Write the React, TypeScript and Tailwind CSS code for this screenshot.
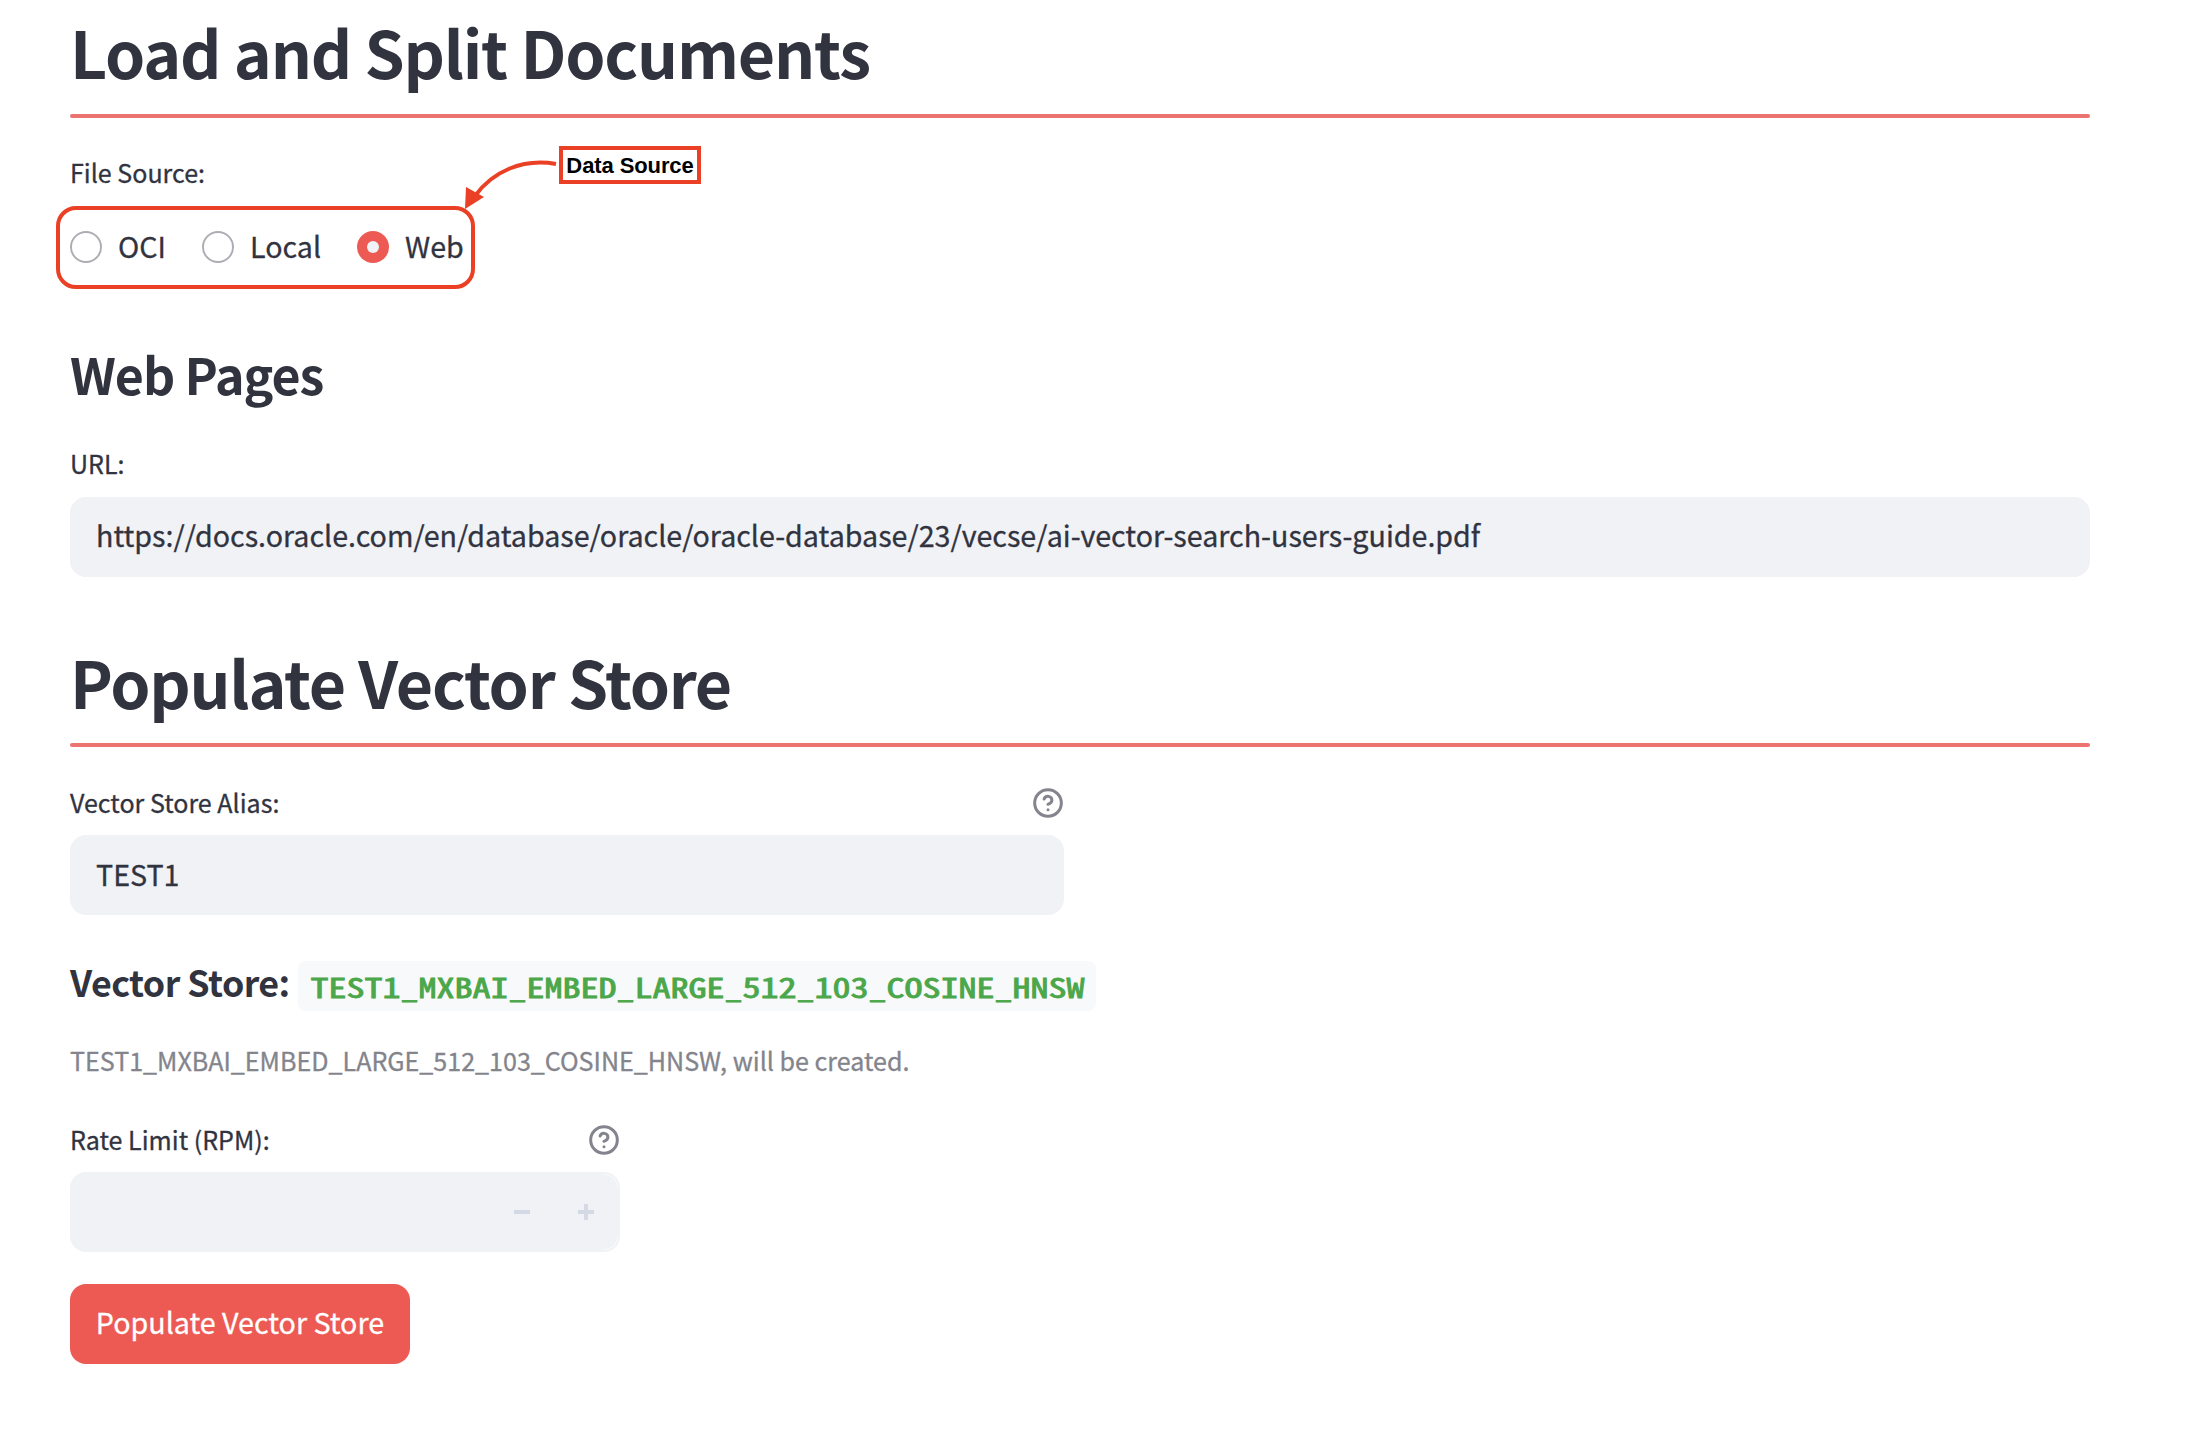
import React from "react";

const SANS = "font-['Noto_Sans_CJK_SC','Noto_Sans',sans-serif]";
const MONO = "font-['Noto_Sans_Mono_CJK_SC','Liberation_Mono',monospace]";
const BODY = "[-webkit-text-stroke:0.3px_currentColor]";

function Help() {
  return (
    <svg width="32" height="32" viewBox="0 0 24 24" fill="none" stroke="#83848d" strokeWidth="2.25" strokeLinecap="round" strokeLinejoin="round">
      <circle cx="12" cy="12" r="10" />
      <path d="M9.09 9a3 3 0 0 1 5.83 1c0 2-3 3-3 3" />
      <path d="M12 17h.01" />
    </svg>
  );
}

function Title({ children }: { children: React.ReactNode }) {
  return <h1 className="h-[72px] text-[64.4px] leading-[72px] font-bold tracking-[-1.2px] whitespace-nowrap">{children}</h1>;
}

function Label({ children, className = "pb-[3px]" }: { children: React.ReactNode; className?: string }) {
  return <span className={`text-[25.06px] leading-8 whitespace-nowrap ${className} ${BODY}`}>{children}</span>;
}

function Radio({ label, checked, className = "" }: { label: string; checked?: boolean; className?: string }) {
  return (
    <label className={`flex items-center gap-4 ${className}`}>
      {checked ? (
        <span className="flex size-8 shrink-0 items-center justify-center rounded-full bg-[#ed5a54]">
          <span className="size-3 rounded-full bg-[#f0f2f6]" />
        </span>
      ) : (
        <span className="size-8 shrink-0 rounded-full border-2 border-[#adaeb4] bg-white" />
      )}
      <span className={`-mt-[3px] text-[28.64px] leading-8 whitespace-nowrap ${BODY}`}>{label}</span>
    </label>
  );
}

export default function App() {
  return (
    <main className={`relative h-[1444px] w-[2186px] overflow-hidden bg-white pr-24 pl-[70px] text-[#31333f] ${SANS}`}>
      <div className="pt-[15px]">
        <Title>Load and Split Documents</Title>
      </div>
      <div className="mt-[27px] h-1 rounded-full bg-[#eb7370]" />

      <div className="mt-10 flex h-8 items-center">
        <Label className="pb-[5px]">File Source:</Label>
      </div>
      <div className="mt-4 -ml-[14px] flex h-[83px] w-[419px] items-center rounded-[20px] border-4 border-[#ea4025] pb-px pl-[10px]">
        <Radio label="OCI" className="w-[132px]" />
        <Radio label="Local" className="w-[155px]" />
        <Radio label="Web" checked />
      </div>

      <h2 className="mt-[56px] h-14 text-[50.1px] leading-[56px] font-bold tracking-[-1px]">Web Pages</h2>

      <div className="mt-[48px] flex h-8 items-center">
        <Label className="pb-[5px]">URL:</Label>
      </div>
      <div className={`mt-4 flex h-20 items-center rounded-2xl bg-[#f0f2f6] px-[26px] pb-[4px] text-[28.65px] leading-10 whitespace-nowrap ${BODY}`}>
        https://docs.oracle.com/en/database/oracle/oracle-database/23/vecse/ai-vector-search-users-guide.pdf
      </div>

      <div className="mt-[68px]">
        <Title>Populate Vector Store</Title>
      </div>
      <div className="mt-[26px] h-1 rounded-full bg-[#eb7370]" />

      <div className="mt-10 flex h-8 w-[994px] items-center justify-between">
        <Label>Vector Store Alias:</Label>
        <Help />
      </div>
      <div className={`mt-4 flex h-20 w-[994px] items-center rounded-2xl bg-[#f0f2f6] px-[26px] pb-[3px] text-[28.64px] leading-10 ${BODY}`}>TEST1</div>

      <div className="mt-[46px] flex h-[50px] items-center">
        <span className="w-[228px] pb-[10px] text-[35.8px] leading-[50px] font-bold tracking-[-0.55px] whitespace-nowrap">Vector Store:</span>
        <code className={`flex h-[50px] w-[798px] items-center rounded-lg bg-[#f8f9fb] pb-px pl-[12.5px] text-[36px] leading-[50px] font-normal whitespace-nowrap text-[#4ba74a] [-webkit-text-stroke:1.1px_currentColor] ${MONO}`}>
          <span className="inline-block scale-y-[0.76]">TEST1_MXBAI_EMBED_LARGE_512_103_COSINE_HNSW</span>
        </code>
      </div>

      <div className={`mt-[34px] flex h-9 items-center pb-[6px] text-[25.07px] leading-8 whitespace-nowrap text-[#83848c] ${BODY}`}>
        TEST1_MXBAI_EMBED_LARGE_512_103_COSINE_HNSW, will be created.
      </div>

      <div className="mt-[43px] flex h-8 w-[550px] items-center justify-between">
        <Label>Rate Limit (RPM):</Label>
        <Help />
      </div>
      <div className="relative mt-4 flex h-20 w-[550px] items-center justify-end gap-12 rounded-2xl bg-[#f0f2f6] pr-[26px]">
        <span className="h-1 w-4 bg-[#d5d9e5]" />
        <svg width="16" height="16" viewBox="0 0 16 16" fill="#d5d9e5">
          <path d="M6 0h4v6h6v4h-6v6H6v-6H0V6h6z" />
        </svg>
        <svg className="absolute top-0 right-0" width="20" height="80" viewBox="0 0 20 80" fill="none" stroke="#fafbfc" strokeWidth="1">
          <path d="M4 2.5Q16 3 18 16M4 77.5Q16 77 18 64" />
        </svg>
      </div>

      <button className={`mt-8 flex h-20 w-[340px] items-center justify-center rounded-2xl bg-[#ed5a54] pb-[4px] text-[28.64px] leading-10 whitespace-nowrap text-white ${BODY}`}>
        Populate Vector Store
      </button>

      <div className="absolute top-[146px] left-[559px] flex h-[38px] w-[142px] items-center justify-center border-4 border-[#ea4025] bg-white pt-[2px] font-['Liberation_Sans',Arial,sans-serif] text-[22px] leading-7 font-bold tracking-[-0.1px] whitespace-nowrap text-black">
        Data Source
      </div>
      <svg className="absolute top-[150px] left-[456px]" width="104" height="64" viewBox="0 0 104 64">
        <path d="M100 14C66 8 36 22 19 46" fill="none" stroke="#ea4025" strokeWidth="4" />
        <path d="M9 59L10 37L28 47Z" fill="#ea4025" />
      </svg>
    </main>
  );
}
